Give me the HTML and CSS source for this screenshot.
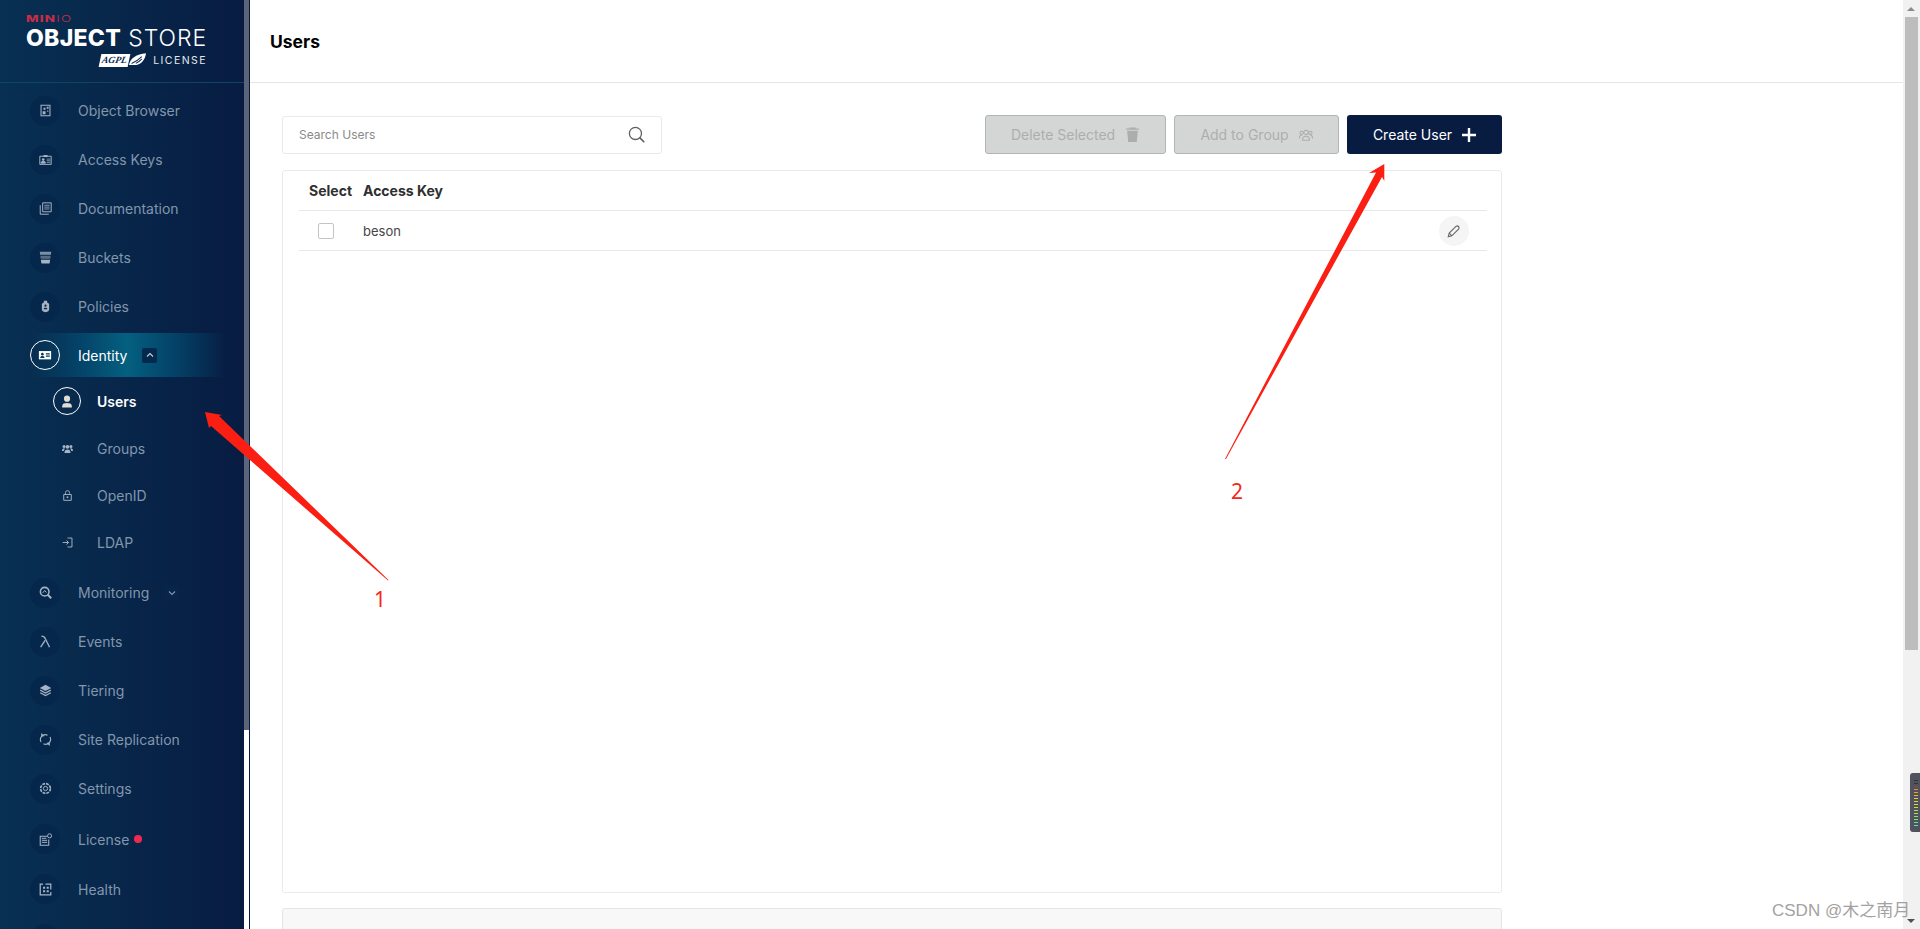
FILE: index.html
```html
<!DOCTYPE html>
<html lang="en">
<head>
<meta charset="utf-8">
<title>MinIO Users</title>
<link rel="stylesheet" href="styles.css">
</head>
<body>
<div class="app">
  <aside class="sidebar">
    <div class="side-scroll">
      <div class="brand">
        <div class="brand-inner">
          <div class="minio"><b>MIN</b>IO</div>
          <div class="store"><b>OBJECT</b><span class="store-light">STORE</span></div>
          <div class="license">
            <span class="agpl"><i>AGPL</i><svg viewBox="0 0 20 16" width="17" height="14"><path d="M0 14C1 6 9 1 20 0c-1 8-6 14-14 14z" fill="#fff"/><path d="M3 12c3-1 8-4 12-8M8 12c2-1 5-3 7-5" stroke="#0a2850" stroke-width="1.200" fill="none"/></svg></span>
            <span class="lic-text">LICENSE</span>
          </div>
        </div>
      </div>
      <nav class="nav">
        <a class="item"><span class="disc"><svg viewBox="0 0 16 16"><path d="M2.500 1.500h11v13h-11z" fill="none" stroke="currentColor" stroke-width="1.300"/><path d="M4.500 9h3.500v3.500H4.500zM9.500 3.500h2.300v2.300H9.500zM5.500 4.500h2.500v2.500H5.500zM10 8h1.500v1.500H10z" fill="currentColor"/></svg></span><span>Object Browser</span></a>
        <a class="item"><span class="disc"><svg viewBox="0 0 16 16"><path d="M1 4h14v10H1z" fill="none" stroke="currentColor" stroke-width="1.200"/><path d="M5.500 2.500h5V5h-5z" fill="currentColor"/><circle cx="5.200" cy="8" r="1.600" fill="currentColor"/><path d="M2.500 12.500c0-3.400 5.400-3.400 5.400 0zM9.500 7.500H14M9.500 9.500H14M9.500 11.500H14" fill="currentColor" stroke="currentColor" stroke-width=".9"/></svg></span><span>Access Keys</span></a>
        <a class="item"><span class="disc"><svg viewBox="0 0 16 16"><path d="M4.500 1h10.500v11H4.500z M1.500 4v11h10.500" fill="none" stroke="currentColor" stroke-width="1.200"/><path d="M6.500 4h6.500M6.500 6.300h6.500M6.500 8.600h6.500" stroke="currentColor" stroke-width="1"/></svg></span><span>Documentation</span></a>
        <a class="item"><span class="disc"><svg viewBox="0 0 16 16"><path d="M1 1h14l-.3 3.500H1.300z" fill="currentColor" opacity=".75"/><path d="M1.700 5.800h12.600l-.4 3.700H2.100z" fill="currentColor" opacity=".5"/><path d="M2.300 10.800h11.400l-.7 4.700H3z" fill="currentColor"/></svg></span><span>Buckets</span></a>
        <a class="item"><span class="disc"><svg viewBox="0 0 16 16"><path d="M6 1h4v2c2 .5 2.500 1.500 2.500 3v5.500c0 2-1.500 3-4.500 3.500-3-.5-4.500-1.500-4.500-3.500V6c0-1.500.5-2.500 2.500-3z" fill="currentColor"/><circle cx="8" cy="7" r="1.400" fill="#06264a"/><path d="M5.800 11.300c0-2.200 4.400-2.200 4.400 0z" fill="#06264a"/></svg></span><span>Policies</span></a>

        <a class="item item-open"><span class="disc disc-on"><svg viewBox="0 0 16 16"><path d="M1 3.500h14v9.500H1z" fill="#fff"/><circle cx="5" cy="7" r="1.500" fill="#06395c"/><path d="M2.500 11.500c0-3 5-3 5 0zM9 6h4.500v1.300H9zM9 8.700h4.500V10H9z" fill="#06395c"/></svg></span><span>Identity</span><span class="chev chev-up"><svg viewBox="0 0 10 10"><path d="M2 6.500 5 3.500l3 3" fill="none" stroke="currentColor" stroke-width="1.100"/></svg></span></a>
        <div class="sub">
          <a class="subitem subitem-on"><span class="subdisc subdisc-on"><svg viewBox="0 0 12 16"><circle cx="6" cy="4.500" r="3.800" fill="currentColor"/><path d="M0 15.500c0-1 0-4 2-5 2.500-1 5.500-1 8 0 2 1 2 4 2 5z" fill="currentColor"/></svg></span><span>Users</span></a>
          <a class="subitem"><span class="subdisc"><svg viewBox="0 0 16 14"><circle cx="8" cy="4.500" r="2.700" fill="currentColor"/><circle cx="3" cy="4" r="2.200" fill="currentColor"/><circle cx="13" cy="4" r="2.200" fill="currentColor"/><path d="M3.500 13.500c0-6.500 9-6.500 9 0zM0 10.500c0-3 1.500-4.300 3.500-4l.5 1-1.500 3zM16 10.500c0-3-1.500-4.300-3.500-4l-.5 1 1.500 3z" fill="currentColor"/></svg></span><span>Groups</span></a>
          <a class="subitem"><span class="subdisc"><svg viewBox="0 0 16 16"><path d="M2.500 6.500h11v8.500h-11z" fill="none" stroke="currentColor" stroke-width="1.400"/><path d="M5 6.500V4a3 3 0 0 1 6 0v1.500" fill="none" stroke="currentColor" stroke-width="1.300"/><rect x="6.800" y="9.300" width="2.400" height="2.400" fill="currentColor"/></svg></span><span>OpenID</span></a>
          <a class="subitem"><span class="subdisc"><svg viewBox="0 0 16 16"><path d="M8 1.500h6.500v13H8" fill="none" stroke="currentColor" stroke-width="1.400"/><path d="M1 8h8.500M6.500 5 9.500 8l-3 3" fill="none" stroke="currentColor" stroke-width="1.400"/></svg></span><span>LDAP</span></a>
        </div>
        <a class="item item-mon"><span class="disc"><svg viewBox="0 0 16 16"><circle cx="7" cy="7" r="5.300" fill="none" stroke="currentColor" stroke-width="1.900"/><path d="m10.500 10.500 4.500 4.500" stroke="currentColor" stroke-width="2.400"/><path d="M4.500 8.500 7 5.500 9 8" fill="none" stroke="currentColor" stroke-width="1.200"/></svg></span><span>Monitoring</span><span class="chev chev-down"><svg viewBox="0 0 10 10"><path d="M2 3.500 5 6.500l3-3" fill="none" stroke="currentColor" stroke-width="1.100"/></svg></span></a>
        <a class="item"><span class="disc"><svg viewBox="0 0 16 16"><path d="M3 1.500c3 0 4 1 5 3.500l5 10M2 15 7.500 6.500" fill="none" stroke="currentColor" stroke-width="1.600"/></svg></span><span>Events</span></a>
        <a class="item"><span class="disc"><svg viewBox="0 0 16 16"><path d="M8 1 15 4.800 8 8.600 1 4.800z" fill="currentColor"/><path d="M1.500 7.500 8 11l6.500-3.500M1.500 10.700 8 14.300l6.500-3.600" fill="none" stroke="currentColor" stroke-width="1.500"/></svg></span><span>Tiering</span></a>
        <a class="item"><span class="disc"><svg viewBox="0 0 16 16"><path d="M2.500 11a6 6 0 0 1 8-8.200M13.500 5a6 6 0 0 1-8 8.200" fill="none" stroke="currentColor" stroke-width="1.400"/><path d="M2.500 0l.5 4.500 4-.8zM13.500 16l-.5-4.500-4 .8z" fill="currentColor"/></svg></span><span>Site Replication</span></a>
        <a class="item"><span class="disc"><svg viewBox="0 0 16 16"><circle cx="8" cy="8" r="2.600" fill="none" stroke="currentColor" stroke-width="1.200"/><circle cx="8" cy="8" r="6" fill="none" stroke="currentColor" stroke-width="2" stroke-dasharray="3.500 1.200"/></svg></span><span>Settings</span></a>
        <a class="item item-lic"><span class="disc"><svg viewBox="0 0 16 16"><path d="M10 4H1.500v11h10.500V8" fill="none" stroke="currentColor" stroke-width="1.300"/><path d="M3.500 6.500h5.500M3.500 9h6.500M3.500 11.500h6.500" stroke="currentColor" stroke-width="1.200"/><circle cx="13" cy="3.500" r="2.500" fill="none" stroke="currentColor" stroke-width="1.200"/></svg></span><span>License</span><span class="dot"></span></a>
        <a class="item item-health"><span class="disc"><svg viewBox="0 0 16 16"><path d="M5 1.500H1.500v13h13V11M14.500 8V1.500H8" fill="none" stroke="currentColor" stroke-width="1.500"/><path d="M5 4.500h2.500V7H5zM9.500 4.500H12V7H9.500zM5 9h2.500v2.500H5zM9.500 9H12v2.500H9.500z" fill="currentColor"/></svg></span><span>Health</span></a>
        <a class="item"><span class="disc"></span></a>
      </nav>
    </div>
    <div class="side-track"><div class="side-thumb"></div></div>
  </aside>

  <main class="main">
    <header class="topbar"><h1>Users</h1></header>
    <div class="content">
      <div class="toolbar">
        <label class="search">
          <input class="search-input" type="text" placeholder="Search Users">
          <svg class="search-icon" viewBox="0 0 16 16"><circle cx="7" cy="7" r="5.700" fill="none" stroke="currentColor" stroke-width="1.200"/><path d="m11 11 4.300 4.300" stroke="currentColor" stroke-width="1.500"/></svg>
        </label>
        <div class="actions">
          <button class="btn btn-off btn-del">Delete Selected<svg viewBox="0 0 14 14" width="15" height="15"><path d="M4 .5h6v1h3v1H1v-1h3zM2 3.500h10L11 14H3z" fill="currentColor"/></svg></button>
          <button class="btn btn-off btn-add">Add to Group<svg viewBox="0 0 16 16" width="14" height="14"><circle cx="8" cy="5" r="2.500" fill="none" stroke="currentColor" stroke-width="1.200"/><circle cx="3" cy="5.500" r="1.900" fill="none" stroke="currentColor" stroke-width="1.200"/><circle cx="13" cy="5.500" r="1.900" fill="none" stroke="currentColor" stroke-width="1.200"/><path d="M4 14c0-6 8-6 8 0zM.5 12c0-3 1-4 3-4M15.500 12c0-3-1-4-3-4" fill="none" stroke="currentColor" stroke-width="1.200"/></svg></button>
          <button class="btn btn-primary">Create User<svg viewBox="0 0 14 14" width="14" height="14"><path d="M7 0v14M0 7h14" stroke="currentColor" stroke-width="2.400"/></svg></button>
        </div>
      </div>
      <section class="table">
        <div class="row row-head">
          <div class="col-select">Select</div>
          <div class="col-key">Access Key</div>
        </div>
        <div class="row row-body">
          <div class="col-select"><span class="check"></span></div>
          <div class="col-key">beson</div>
          <span class="edit"><svg viewBox="0 0 16 16" width="14" height="14"><path d="M2.500 10.500 10.500 2.500a2.200 2.200 0 0 1 3 3L5.500 13.500 1.500 14.500z" fill="none" stroke="currentColor" stroke-width="1.300"/><path d="m2.500 10.500 3 3" stroke="currentColor" stroke-width="1.300"/></svg></span>
        </div>
      </section>
      <div class="panel-next"></div>
    </div>
  </main>

  <div class="page-scroll">
    <svg class="page-arrow-up" viewBox="0 0 10 5" width="8" height="4"><path d="M0 5h10L5 0z" fill="#8a8a8a"/></svg>
    <div class="page-thumb"></div>
    <div class="meter">
      <div class="meter-bars"></div>
    </div>
    <svg class="page-arrow" viewBox="0 0 8 4" width="8" height="4"><path d="M0 0h8L4 4z" fill="#505050"/></svg>
  </div>
</div>

<svg class="notes" viewBox="0 0 1920 929" width="1920" height="929">
  <path d="M205 412 222 415 219 416 388.500 580 388 580.500 211 426 209 428z" fill="#fb1f13"/>
  <path d="M1384.300 164 1384.300 181 1382 177 1226 459 1225 459 1376 172.500 1369 173z" fill="#fb1f13"/>
</svg>
<span class="note note-1">1</span>
<span class="note note-2">2</span>
<span class="watermark">CSDN @木之南月</span>
</body>
</html>
```

FILE: styles.css
```css
* { box-sizing: border-box; }
html, body { margin: 0; height: 100%; overflow: hidden; background: #fff; }
body { font-family: Inter, "Liberation Sans", sans-serif; color: #07193e; }

.app { display: flex; height: 929px; }

/* Sidebar */
.sidebar { width: 250px; flex: none; display: flex; height: 100%; background: #fff; }
.side-scroll {
  width: 244px; flex: none; height: 100%; overflow: hidden;
  background: linear-gradient(90deg, #073052 0%, #081c42 100%);
}
.side-track { width: 6px; flex: none; border-right: 1px solid #081c42; background: #fff; }
.side-thumb { height: 730px; width: 5px; background: #5b6479; }

.brand { height: 83px; border-bottom: 1px solid #0d4468; padding: 15px 0 0 26px; }
.brand-inner { width: 180px; color: #fff; }
.minio { font-size: 9.500px; line-height: 8px; color: #c72c48; letter-spacing: .9px; font-weight: 300; transform: scaleX(1.400); transform-origin: left; }
.minio b { font-weight: 800; }
.store { display: flex; justify-content: space-between; align-items: baseline; font-size: 23px; line-height: 26px; white-space: nowrap; margin-top: 2px; }
.store b { font-weight: 800; letter-spacing: .3px; }
.store-light { font-weight: 300; letter-spacing: .9px; margin-right: -1px; }
.license { display: flex; justify-content: flex-end; align-items: center; height: 16px; margin-top: 1px; }
.agpl { display: flex; align-items: center; margin-right: 7px; }
.agpl i { background: #fff; color: #0a2850; font-size: 9.500px; line-height: 13px; padding: 0 2px; font-weight: 700; font-family: "Liberation Serif", serif; transform: skewX(-12deg); }
.lic-text { font-size: 10.500px; letter-spacing: 1.450px; font-weight: 400; color: #e4e8ee; margin-right: -1px; }

.nav { padding: 3px 0 0 30px; }
.item { display: flex; align-items: center; height: 49px; font-size: 14px; color: #8296ad; }
.item > span:nth-child(2) { margin-left: 18px; }
.disc {
  width: 30px; height: 30px; flex: none; border-radius: 50%;
  background: #06274c; color: #a6b4c4;
  display: flex; align-items: center; justify-content: center;
}
.disc svg { width: 13px; height: 13px; }

.item-open {
  height: 44px; margin: 2px 12px 3px 0; color: #fff;
  background: linear-gradient(90deg, rgba(6,45,78,0) 0%, #04476c 28%, #04607f 48%, #04466c 68%, rgba(6,34,70,.3) 96%, rgba(6,34,70,0) 100%);
}
.disc-on { background: transparent; border: 1px solid #fff; }
.disc-on svg { width: 14px; height: 14px; }

.chev {
  width: 15px; height: 15px; border-radius: 2px; margin-left: 15px;
  display: flex; align-items: center; justify-content: center;
  background: #05294d; color: #c8d2dc;
}
.chev svg { width: 10px; height: 10px; }
.chev-down { margin-left: 15px; background: #07244a; color: #8296ad; }

.sub { padding-left: 23px; }
.subitem { display: flex; align-items: center; height: 47px; font-size: 14px; color: #8296ad; }
.subitem > span:last-child { margin-left: 16px; }
.subdisc { width: 28px; height: 28px; flex: none; display: flex; align-items: center; justify-content: center; color: #a6b4c4; border-radius: 50%; }
.subdisc svg { width: 11px; height: 11px; }
.subitem-on { color: #fff; font-weight: 600; height: 42px; margin-bottom: 3px; }
.subdisc-on { border: 1px solid #fff; color: #e2ddd3; }
.subdisc-on svg { width: 10px; height: 13px; }
.item-mon { margin-top: 2px; }
.item-lic { margin-top: 1px; height: 50px; }
.item-health { height: 50px; }
.dot { width: 8px; height: 8px; border-radius: 50%; background: #f0294f; margin-left: 5px; }

/* Main */
.main { flex: 1; min-width: 0; height: 100%; display: flex; flex-direction: column; overflow: hidden; }
.topbar { height: 83px; flex: none; border-bottom: 1px solid #e5e5e5; padding: 0 20px; display: flex; align-items: center; }
.topbar h1 { margin: 0; font-size: 17.500px; font-weight: 700; color: #000; }

.content { padding: 32px 0 0 32px; width: 1252px; }
.toolbar { display: flex; justify-content: space-between; align-items: center; height: 39px; }
.search {
  width: 380px; height: 38px; border: 1px solid #eaeaea; border-radius: 3px; background: #fff;
  display: flex; align-items: center; padding: 0 16px 1px; margin-top: 1px;
}
.search-input { flex: 1; min-width: 0; border: 0; outline: 0; padding: 0 0 1px; font: 12px Inter, sans-serif; color: #333; background: transparent; }
.search-input::placeholder { color: #8a8a8a; opacity: 1; }
.search-icon { width: 17px; height: 17px; color: #5f5f5f; flex: none; }
.actions { display: flex; gap: 8px; height: 39px; }
.btn {
  height: 39px; border-radius: 3px; padding: 0; font: 14px Inter, sans-serif;
  display: flex; align-items: center; justify-content: center; gap: 10px;
}
.btn-off { background: #d4d6d5; border: 1px solid #b3b5b4; color: #acaeae; }
.btn-del { width: 181px; }
.btn-add { width: 165px; }
.btn-primary { width: 155px; background: #081c42; border: 0; color: #fff; }

.table {
  margin-top: 16px; height: 723px; border: 1px solid #eaeaea; border-radius: 3px;
  padding: 0 14px 0 16px;
}
.row { display: flex; align-items: center; border-bottom: 1px solid #e8e8e8; }
.row-head { height: 40px; font-weight: 700; font-size: 14px; color: #2f2f2f; }
.row-body { height: 40px; font-size: 13px; color: #454545; }
.col-select { width: 64px; padding-left: 10px; }
.row-body .col-select { padding-left: 19px; display: flex; }
.col-key { flex: 1; }
.check { width: 16px; height: 16px; border: 1px solid #c4c4c4; border-radius: 2px; background: #fff; }
.edit {
  width: 30px; height: 30px; border-radius: 50%; background: #f5f5f5; color: #666;
  display: flex; align-items: center; justify-content: center; margin-right: 18px;
}
.panel-next { margin-top: 15px; height: 60px; border: 1px solid #e5e5e5; border-radius: 3px; background: #f8f8f8; }

/* Page scrollbar */
.page-scroll { width: 17px; flex: none; height: 100%; background: #f1f1f1; position: relative; padding-top: 17px; }
.page-thumb { height: 633px; width: 13px; margin-left: 2px; background: #bdbdbd; }
.page-arrow-up { position: absolute; left: 4px; top: 7px; }
.meter {
  position: absolute; right: 0; top: 773px; width: 10px; height: 59px;
  background: #50525e; border-radius: 3px 0 0 3px; padding: 7px 2px 6px 4px;
}
.meter-bars {
  width: 4px; height: 100%;
  background:
    repeating-linear-gradient(0deg, transparent 0 1px, #50525e 1px 3px),
    linear-gradient(0deg, #4be6b0 0%, #b8e04a 35%, #f3cc2e 60%, #f0823a 80%, #333 90%);
}
.page-arrow { position: absolute; left: 4px; bottom: 6px; }

/* Annotations on top of the screenshot */
.notes { position: absolute; left: 0; top: 0; pointer-events: none; }
.note { position: absolute; color: #f5261a; font: 400 21px "Noto Sans", sans-serif; line-height: 22px; }
.note-1 { left: 374px; top: 588px; }
.note-2 { left: 1231px; top: 480px; }
.watermark {
  position: absolute; left: 1772px; top: 899px; font: 17px "Liberation Sans", "Noto Sans CJK SC", sans-serif;
  color: #a2a2a2; line-height: 24px; white-space: nowrap;
}
```
